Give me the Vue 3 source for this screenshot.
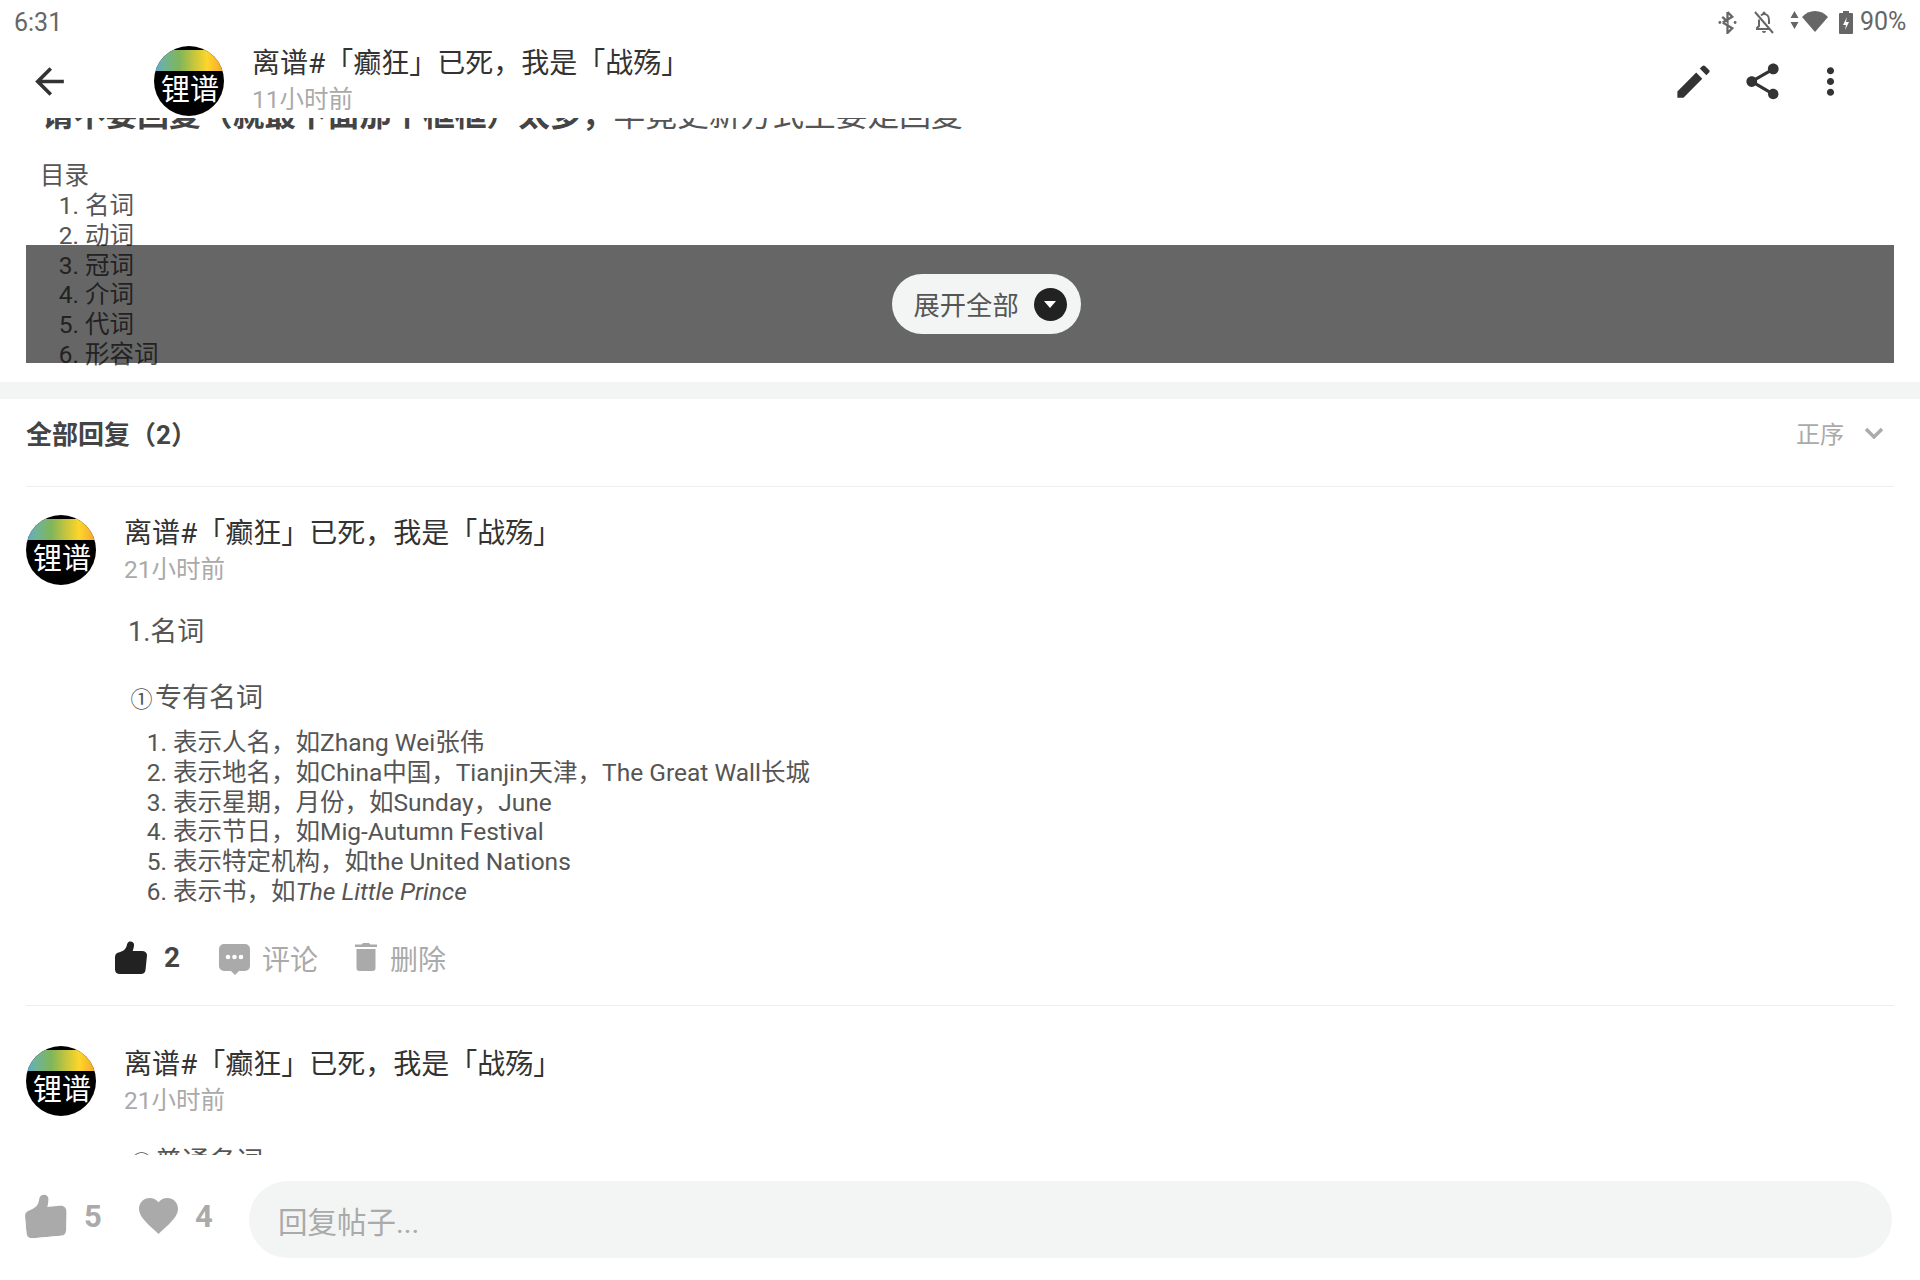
<script setup>
const toc = ['名词', '动词', '冠词', '介词', '代词', '形容词']
const name = '离谱#「癫狂」已死，我是「战殇」'
</script>

<template>
  <div class="app">
    <div class="status">
      <span class="clock">6:31</span>
      <div class="sys">
        <svg class="s-bt" viewBox="0 0 20 24"><path d="M10 1v10L4.500 6M10 13v10l5-5-10-6M10 1l5 5-10 6" fill="none" stroke="#666" stroke-width="2.400"/><circle cx="2" cy="12" r="1.500" fill="#666"/><circle cx="18" cy="12" r="1.500" fill="#666"/></svg>
        <svg class="s-bell" viewBox="0 0 24 24"><path d="M7 9.500V16l-2 2v1h13M9 5.500C10 4.500 11 4 12 4c3 0 5 2.500 5 6v4" fill="none" stroke="#666" stroke-width="2"/><path d="M10 21h4a2 2 0 0 1-4 0zM10.500 3a1.500 1.500 0 0 1 3 0v1h-3z" fill="#666"/><path d="M3 2l18 21" stroke="#666" stroke-width="2"/></svg>
        <svg class="s-arrows" viewBox="0 0 8 18"><path d="M4 0l4 7H0zM4 18l-4-7h8z" fill="#666"/></svg>
        <svg class="s-wifi" viewBox="0 0 26 22"><path d="M13 22L0 7C3.500 3 8 1 13 1s9.500 2 13 6z" fill="#666"/></svg>
        <svg class="s-batt" viewBox="0 0 14 23"><path d="M4 0h6v2h3a1 1 0 0 1 1 1v19a1 1 0 0 1-1 1H1a1 1 0 0 1-1-1V3a1 1 0 0 1 1-1h3z" fill="#666"/><path d="M8 6l-4 8h3l-1 5 4-8H7z" fill="#fff"/></svg>
        <span class="pct">90%</span>
      </div>
    </div>

    <header class="bar">
      <svg class="ic back" viewBox="0 0 24 24"><path d="M20 11H7.830l5.590-5.590L12 4l-8 8 8 8 1.410-1.410L7.830 13H20v-2z" fill="#333"/></svg>
      <div class="avatar head-av"><i class="band"></i><span>锂谱</span></div>
      <div class="who">
        <div class="name">{{ name }}</div>
        <div class="time">11小时前</div>
      </div>
      <div class="tools">
        <svg class="ic" viewBox="0 0 24 24"><path d="M3 17.600V21h3.400L16.900 10.400l-3.400-3.400zM20.700 7c.4-.4.4-1 0-1.400l-2.300-2.300c-.4-.4-1-.4-1.400 0l-1.500 1.500 3.700 3.700z" fill="#333"/></svg>
        <svg class="ic" viewBox="0 0 24 24"><path d="M18 16.080c-.76 0-1.440.3-1.960.77L8.910 12.700c.05-.23.09-.46.09-.7s-.04-.47-.09-.7l7.050-4.110c.54.5 1.250.81 2.040.81 1.660 0 3-1.340 3-3s-1.340-3-3-3-3 1.340-3 3c0 .24.04.47.09.7L8.040 9.810C7.500 9.310 6.790 9 6 9c-1.660 0-3 1.340-3 3s1.340 3 3 3c.79 0 1.500-.31 2.040-.81l7.120 4.160c-.05.21-.08.43-.08.65 0 1.610 1.310 2.920 2.920 2.920 1.610 0 2.920-1.310 2.920-2.920s-1.310-2.920-2.920-2.920z" fill="#333"/></svg>
        <svg class="ic" viewBox="0 0 24 24"><path d="M12 8c1.100 0 2-.9 2-2s-.9-2-2-2-2 .9-2 2 .9 2 2 2zm0 2c-1.100 0-2 .9-2 2s.9 2 2 2 2-.9 2-2-.9-2-2-2zm0 6c-1.100 0-2 .9-2 2s.9 2 2 2 2-.9 2-2-.9-2-2-2z" fill="#333"/></svg>
      </div>
    </header>

    <main class="scroll">
      <section class="post">
        <p class="notice"><b>请不要回复（就最下面那个框框）太多，</b>毕竟更新方式主要是回复</p>
        <div class="toc-title">目录</div>
        <ol class="toc">
          <li v-for="t in toc" :key="t">{{ t }}</li>
        </ol>
        <div class="shade">
          <button class="expand">
            <span>展开全部</span>
            <i class="caret"></i>
          </button>
        </div>
      </section>

      <div class="gap"></div>

      <div class="replies-head">
        <h2>全部回复（2）</h2>
        <div class="sort">
          <span>正序</span>
          <svg viewBox="0 0 20 12"><path d="M2 2l8 8 8-8" fill="none" stroke="#aaa" stroke-width="3.400"/></svg>
        </div>
      </div>

      <article class="reply first">
        <div class="reply-head">
          <div class="avatar"><i class="band"></i><span>锂谱</span></div>
          <div class="who">
            <div class="name">{{ name }}</div>
            <div class="time">21小时前</div>
          </div>
        </div>
        <div class="content">
          <p class="h1">1.名词</p>
          <p class="h2"><span class="circled">①</span>专有名词</p>
          <ol class="items">
            <li>表示人名，如Zhang Wei张伟</li>
            <li>表示地名，如China中国，Tianjin天津，The Great Wall长城</li>
            <li>表示星期，月份，如Sunday，June</li>
            <li>表示节日，如Mig-Autumn Festival</li>
            <li>表示特定机构，如the United Nations</li>
            <li>表示书，如<em>The Little Prince</em></li>
          </ol>
        </div>
        <div class="actions">
          <svg class="a-like" viewBox="0 0 33 33"><path d="M13.500 1c3-1.500 6 .5 5.500 3.500-.2 2-.8 4-1.300 5.500H27c3 0 5 1.500 5 4.500l-1.500 14.500c-.3 2.500-2 4-4.500 4H5c-3 0-5-1.500-5-4.500V16c0-2.500 1.500-4 3.500-4.500 3-.8 6.500-2 8-6 .5-1.500 .6-3.500 2-4.500z" fill="#222"/></svg>
          <span class="count">2</span>
          <svg class="a-chat" viewBox="0 0 31 31"><path d="M5 0h21a5 5 0 0 1 5 5v17a5 5 0 0 1-5 5h-6l-4 4-4-4H5a5 5 0 0 1-5-5V5a5 5 0 0 1 5-5z" fill="#aaa"/><circle cx="9" cy="13" r="2.300" fill="#fff"/><circle cx="15.500" cy="13" r="2.300" fill="#fff"/><circle cx="22" cy="13" r="2.300" fill="#fff"/></svg>
          <span class="act-text">评论</span>
          <svg class="a-trash" viewBox="0 0 22 29"><path d="M0 2.500h6.500L8 1h6l1.500 1.500H22v2.500H0z" fill="#aaa"/><path d="M1.500 7h19v19a3 3 0 0 1-3 3h-13a3 3 0 0 1-3-3z" fill="#aaa"/></svg>
          <span class="act-text">删除</span>
        </div>
      </article>

      <article class="reply last">
        <div class="reply-head">
          <div class="avatar"><i class="band"></i><span>锂谱</span></div>
          <div class="who">
            <div class="name">{{ name }}</div>
            <div class="time">21小时前</div>
          </div>
        </div>
        <div class="content">
          <p class="h1 second"><span class="circled">②</span>普通名词</p>
        </div>
      </article>
    </main>

    <footer class="foot">
      <svg class="f-like" viewBox="0 0 33 33"><path d="M13.500 1c3-1.500 6 .5 5.500 3.500-.2 2-.8 4-1.300 5.500H27c3 0 5 1.500 5 4.500l-1.500 14.500c-.3 2.500-2 4-4.500 4H5c-3 0-5-1.500-5-4.500V16c0-2.500 1.500-4 3.500-4.500 3-.8 6.500-2 8-6 .5-1.500 .6-3.500 2-4.500z" fill="#aaa"/></svg>
      <span class="f-count first-count">5</span>
      <svg class="f-heart" viewBox="2 3 20 18.350"><path d="M12 21.350l-1.450-1.320C5.400 15.360 2 12.280 2 8.500 2 5.420 4.420 3 7.500 3c1.740 0 3.410.81 4.500 2.090C13.090 3.810 14.760 3 16.500 3 19.580 3 22 5.420 22 8.500c0 3.780-3.400 6.860-8.550 11.540L12 21.350z" fill="#aaa"/></svg>
      <span class="f-count">4</span>
      <div class="input">回复帖子...</div>
    </footer>
  </div>
</template>

<style>
html, body { margin: 0; background: #fff; }
</style>

<style scoped>
.app {
  width: 1920px;
  height: 1280px;
  display: flex;
  flex-direction: column;
  overflow: hidden;
  background: #fff;
  font-family: Roboto, "Noto Sans CJK SC", sans-serif;
  color: #555;
}
.status {
  height: 44px;
  flex: none;
  display: flex;
  justify-content: space-between;
  align-items: flex-start;
  padding: 9px 14px 0;
  box-sizing: border-box;
  color: #666;
  font-size: 25px;
  line-height: 28px;
}
.sys { display: flex; align-items: center; height: 28px; margin-top: -1px; }
.sys svg { display: block; flex: none; }
.s-bt { width: 19px; height: 23px; margin-right: 15px; }
.s-bell { width: 24px; height: 24px; margin-right: 14px; }
.s-arrows { width: 9px; height: 18px; margin-right: 3px; margin-bottom: 4px; }
.s-wifi { width: 26px; height: 22px; margin-right: 11px; margin-bottom: 2px; }
.s-batt { width: 14px; height: 23px; margin-right: 7px; }
.pct { width: 46px; white-space: nowrap; }

.bar {
  height: 74px;
  flex: none;
  display: flex;
  align-items: center;
  padding-left: 28px;
  background: #fff;
  position: relative;
  z-index: 1;
}
.ic { width: 43px; height: 43px; flex: none; display: block; }
.head-av { margin-left: 83px; }
.bar .who { margin-left: 28px; flex: 1; }
.tools { display: flex; gap: 25.500px; margin-right: 68px; }

.avatar {
  width: 70px;
  height: 70px;
  flex: none;
  border-radius: 50%;
  background: #000;
  overflow: hidden;
  position: relative;
  color: #fff;
  font-size: 29px;
  line-height: 29px;
  text-align: center;
}
.avatar span { position: absolute; left: 2px; right: 0; top: 30px; white-space: nowrap; }
.band {
  position: absolute;
  left: 0;
  right: 0;
  top: 4px;
  height: 21px;
  background: linear-gradient(90deg, #5aa9d6 0%, #6fb39a 14%, #7fb55a 36%, #c8c63c 58%, #fdd62a 76%, #f4a22e 100%);
}
.who { min-width: 0; }
.name { font-size: 28px; line-height: 34px; color: #333; white-space: nowrap; }
.time { font-size: 24.500px; line-height: 30px; color: #aaa; margin-top: 4px; }

.scroll { flex: 1; min-height: 0; overflow: hidden; }
.post {
  position: relative;
  height: 264px;
  overflow: hidden;
  padding: 0 26px;
  box-sizing: border-box;
}
.notice {
  margin: -22px 0 0 16px;
  font-size: 31.750px;
  line-height: 40px;
  white-space: nowrap;
  color: #555;
}
.notice b { color: #444; }
.toc-title { font-size: 24.500px; line-height: 30px; margin: 25px 0 0 14px; }
.toc { margin: 0; padding: 0 0 0 59px; font-size: 24.500px; line-height: 29.800px; }
.shade {
  position: absolute;
  left: 26px;
  right: 26px;
  top: 127px;
  height: 118px;
  background: rgba(0, 0, 0, .6);
  display: flex;
  justify-content: center;
  align-items: center;
  padding-left: 52px;
  box-sizing: border-box;
}
.expand {
  width: 189px;
  height: 60px;
  border: 0;
  border-radius: 30px;
  background: #f3f5f4;
  display: flex;
  align-items: center;
  padding: 0 14px 2px 22px;
  box-sizing: border-box;
  justify-content: space-between;
  font: 26.300px Roboto, "Noto Sans CJK SC", sans-serif;
  color: #555;
}
.caret {
  width: 33px;
  height: 33px;
  border-radius: 50%;
  background: #222;
  position: relative;
  flex: none;
  margin-top: 2px;
}
.caret::after {
  content: "";
  position: absolute;
  left: 10px;
  top: 13px;
  border-left: 6.500px solid transparent;
  border-right: 6.500px solid transparent;
  border-top: 7px solid #fff;
}
.gap { height: 17px; background: #f3f5f4; }
.replies-head {
  margin: 0 26px;
  border-bottom: 1px solid #eee;
  display: flex;
  justify-content: space-between;
  align-items: center;
  padding-bottom: 20px;
  box-sizing: border-box;
  height: 88px;
}
.replies-head h2 { margin: 0; font-size: 26px; font-weight: 700; color: #444; }
.sort { display: flex; align-items: center; gap: 20px; color: #aaa; font-size: 24px; padding-right: 10px; }
.sort svg { width: 20px; height: 12px; display: block; margin-top: 1px; }

.reply { margin: 0 26px; }
.first { border-bottom: 1px solid #eee; height: 518px; }
.last .reply-head { padding-top: 40px; }
.reply-head { display: flex; align-items: flex-start; padding-top: 28px; }
.reply-head .who { margin-left: 28px; }
.reply-head .name { margin-top: 2px; }
.reply-head .time { margin-top: 4px; }
.content { padding-left: 102px; }
.content p { margin: 0; font-size: 27px; line-height: 34px; color: #555; }
.h1 { padding-top: 30px; }
.content .h2 { margin-top: 32px; }
.circled { display: inline-block; width: 27px; font-size: 22px; text-align: center; }
.items { margin: 11px 0 0; padding: 0 0 0 45px; font-size: 24.500px; line-height: 29.800px; color: #555; }
.content .second { padding-top: 29px; }
.actions {
  display: flex;
  align-items: center;
  margin-top: 33px;
  padding-left: 89px;
  height: 36px;
}
.actions svg { display: block; flex: none; }
.a-like { width: 33px; height: 33px; }
.count { font-size: 28px; font-weight: 700; color: #444; margin-left: 16px; width: 16px; }
.a-chat { width: 31px; height: 31px; margin-left: 39px; margin-top: 3px; }
.a-trash { width: 22px; height: 29px; margin-left: 37px; margin-top: -3px; }
.act-text { font-size: 28px; color: #aaa; margin-left: 12px; }
.a-trash + .act-text { margin-left: 13px; }

.foot {
  height: 125px;
  flex: none;
  background: #fff;
  display: flex;
  align-items: center;
  padding: 0 28px 0 25px;
  box-sizing: border-box;
  position: relative;
}
.foot svg { display: block; flex: none; }
.f-like { width: 43px; height: 43px; transform: rotate(-5deg); margin-top: -4px; }
.f-heart { width: 39px; height: 36px; margin-left: 38px; margin-top: -4px; }
.f-count { font-size: 31px; font-weight: 700; color: #aaa; margin-left: 17px; width: 17px; margin-top: -3px; }
.first-count { margin-left: 16px; }
.input {
  flex: 1;
  height: 77px;
  border-radius: 39px;
  background: #f3f5f4;
  margin-left: 37px;
  margin-top: 3px;
  padding: 6px 0 0 29px;
  box-sizing: border-box;
  font-size: 29.500px;
  line-height: 72px;
  color: #aaa;
}
</style>
